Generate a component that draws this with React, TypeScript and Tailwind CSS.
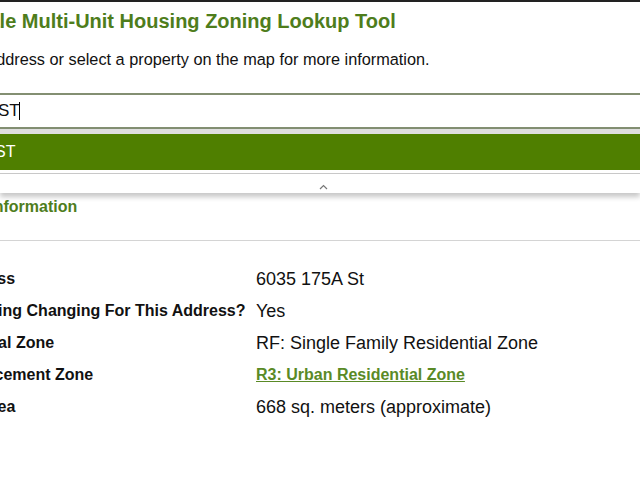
const ROWS = [
  { label: 'Address', value: '6035 175A St' },
  { label: 'Is Zoning Changing For This Address?', value: 'Yes' },
  { label: 'Original Zone', value: 'RF: Single Family Residential Zone' },
  { label: 'Replacement Zone', value: 'R3: Urban Residential Zone', link: true },
  { label: 'Lot Area', value: '668 sq. meters (approximate)' },
];

export default function App() {
  return (
    <div className="w-[640px] h-[480px] overflow-hidden bg-white border-t-2 border-[#222] font-['Liberation_Sans',Arial,sans-serif] text-[#111]">
      <h1 className="mt-[7px] -ml-[96px] whitespace-nowrap text-[20px] leading-[24px] font-bold text-[#4e7d1c]">
        Small-Scale Multi-Unit Housing Zoning Lookup Tool
      </h1>
      <p className="mt-[16px] -ml-[79px] whitespace-nowrap text-[16.3px] leading-[20px]">
        Enter an address or select a property on the map for more information.
      </p>

      {/* search box + suggestion list */}
      <div className="mt-[24px] h-[36px] border-y-2 border-[#838f72] flex items-center">
        <span className="-ml-[88px] whitespace-nowrap text-[17px]">6035 175A ST</span>
        <span className="-ml-[1px] w-[1px] h-[18px] bg-black" />
      </div>
      <div className="relative shadow-[0_4px_5px_rgba(0,0,0,0.22)]">
        <div className="h-[5px] bg-[#dedede]" />
        <div className="h-[36px] bg-[#4f7f00] flex items-center">
          <span className="-ml-[86px] whitespace-nowrap text-[16px] text-white">6035 175A ST</span>
        </div>
        <div className="h-[4px] border-b border-[#c8c8c8]" />
        <div className="h-[19px] flex items-start justify-center pt-[10px] pl-[6px]">
          <svg width="9" height="6" viewBox="0 0 9 6" fill="none">
            <polyline points="1,5 4.5,1.5 8,5" stroke="#777" strokeWidth="1.2" />
          </svg>
        </div>
      </div>

      <h2 className="mt-[4px] -ml-[81px] whitespace-nowrap text-[16px] leading-[20px] font-bold text-[#4e7d1c]">
        Property Information
      </h2>
      <div className="mt-[23px] border-t border-[#d4d4d4]" />

      <div className="mt-[22px] -ml-[49px] grid grid-cols-[305px_1fr]">
        {ROWS.map((row) => (
          <div key={row.label} className="contents">
            <div className="h-[32px] flex items-center whitespace-nowrap text-[16px] font-bold">
              {row.label}
            </div>
            <div className="h-[32px] flex items-center whitespace-nowrap text-[18px]">
              {row.link ? (
                <a href="#" className="text-[16px] font-bold text-[#5a8a26] underline">
                  {row.value}
                </a>
              ) : (
                row.value
              )}
            </div>
          </div>
        ))}
      </div>
    </div>
  );
}
